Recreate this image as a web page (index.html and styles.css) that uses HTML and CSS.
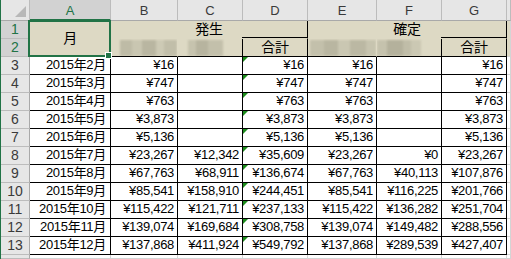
FILE: index.html
```html
<!DOCTYPE html>
<html lang="ja">
<head>
<meta charset="utf-8">
<link rel="stylesheet" href="styles.css">
</head>
<body>
<div class="sheet">
  <div class="corner"><span class="corner-tri"></span></div>
  <div class="ch ch-sel">A</div>
  <div class="ch">B</div>
  <div class="ch">C</div>
  <div class="ch">D</div>
  <div class="ch">E</div>
  <div class="ch">F</div>
  <div class="ch">G</div>
  <div class="ch"></div>

  <div class="rh rh-sel">1</div>
  <div class="c tan month">月</div>
  <div class="c tan group">発生</div>
  <div class="c tan group">確定</div>
  <div class="c tan tan-edge"></div>

  <div class="rh rh-sel">2</div>
  <div class="c tan r2 open"><span class="blur blur-b"></span></div>
  <div class="c tan r2"><span class="blur blur-c"></span></div>
  <div class="c tan r2 total">合計</div>
  <div class="c tan r2 open"><span class="blur blur-e"></span></div>
  <div class="c tan r2"><span class="blur blur-f"></span></div>
  <div class="c tan r2 total">合計</div>
  <div class="c tan tan-edge r2-edge"></div>

  <div class="rh">3</div>
  <div class="c d m">2015年2月</div><div class="c d">¥16</div><div class="c d"></div><div class="c d flag">¥16</div><div class="c d">¥16</div><div class="c d"></div><div class="c d">¥16</div><div class="c g"></div>

  <div class="rh">4</div>
  <div class="c d m">2015年3月</div><div class="c d">¥747</div><div class="c d"></div><div class="c d flag">¥747</div><div class="c d">¥747</div><div class="c d"></div><div class="c d">¥747</div><div class="c g"></div>

  <div class="rh">5</div>
  <div class="c d m">2015年4月</div><div class="c d">¥763</div><div class="c d"></div><div class="c d flag">¥763</div><div class="c d">¥763</div><div class="c d"></div><div class="c d">¥763</div><div class="c g"></div>

  <div class="rh">6</div>
  <div class="c d m">2015年5月</div><div class="c d">¥3,873</div><div class="c d"></div><div class="c d flag">¥3,873</div><div class="c d">¥3,873</div><div class="c d"></div><div class="c d">¥3,873</div><div class="c g"></div>

  <div class="rh">7</div>
  <div class="c d m">2015年6月</div><div class="c d">¥5,136</div><div class="c d"></div><div class="c d flag">¥5,136</div><div class="c d">¥5,136</div><div class="c d"></div><div class="c d">¥5,136</div><div class="c g"></div>

  <div class="rh">8</div>
  <div class="c d m">2015年7月</div><div class="c d">¥23,267</div><div class="c d">¥12,342</div><div class="c d flag">¥35,609</div><div class="c d">¥23,267</div><div class="c d">¥0</div><div class="c d">¥23,267</div><div class="c g"></div>

  <div class="rh">9</div>
  <div class="c d m">2015年8月</div><div class="c d">¥67,763</div><div class="c d">¥68,911</div><div class="c d flag">¥136,674</div><div class="c d">¥67,763</div><div class="c d">¥40,113</div><div class="c d">¥107,876</div><div class="c g"></div>

  <div class="rh">10</div>
  <div class="c d m">2015年9月</div><div class="c d">¥85,541</div><div class="c d">¥158,910</div><div class="c d flag">¥244,451</div><div class="c d">¥85,541</div><div class="c d">¥116,225</div><div class="c d">¥201,766</div><div class="c g"></div>

  <div class="rh">11</div>
  <div class="c d m">2015年10月</div><div class="c d">¥115,422</div><div class="c d">¥121,711</div><div class="c d flag">¥237,133</div><div class="c d">¥115,422</div><div class="c d">¥136,282</div><div class="c d">¥251,704</div><div class="c g"></div>

  <div class="rh">12</div>
  <div class="c d m">2015年11月</div><div class="c d">¥139,074</div><div class="c d">¥169,684</div><div class="c d flag">¥308,758</div><div class="c d">¥139,074</div><div class="c d">¥149,482</div><div class="c d">¥288,556</div><div class="c g"></div>

  <div class="rh">13</div>
  <div class="c d m">2015年12月</div><div class="c d">¥137,868</div><div class="c d">¥411,924</div><div class="c d flag">¥549,792</div><div class="c d">¥137,868</div><div class="c d">¥289,539</div><div class="c d">¥427,407</div><div class="c g"></div>

  <div class="rh"></div>
  <div class="c g"></div><div class="c g"></div><div class="c g"></div><div class="c g"></div><div class="c g"></div><div class="c g"></div><div class="c g"></div><div class="c g"></div>

  <div class="selection"></div>
  <div class="fill-handle"></div>
</div>
</body>
</html>
```

FILE: styles.css
```css
* { box-sizing: border-box; }

html, body {
  margin: 0;
  padding: 0;
  background: #ffffff;
  overflow: hidden;
}

body {
  width: 511px;
  height: 259px;
}

.sheet {
  position: relative;
  display: grid;
  grid-template-columns: 29px 81px 67px 65px 65px 69px 65px 65px 4px;
  grid-template-rows: 21px repeat(13, 18px) 4px;
  width: 511px;
  height: 259px;
  overflow: hidden;
  border-left: 1px solid #217346;
  font-family: "Liberation Sans", "Noto Sans CJK JP", sans-serif;
  font-size: 13px;
  letter-spacing: -0.3px;
  color: #000;
}

/* column headers */
.corner {
  position: relative;
  background: #e6e6e6;
  border-right: 1px solid #bcbcbc;
  border-bottom: 1px solid #a9a9a9;
}
.corner-tri {
  position: absolute;
  right: 3px;
  bottom: 3px;
  width: 0;
  height: 0;
  border-left: 11px solid transparent;
  border-bottom: 11px solid #b8b8b8;
}

.ch {
  display: flex;
  align-items: flex-end;
  justify-content: center;
  padding-bottom: 1px;
  background: #e6e6e6;
  border-right: 1px solid #bcbcbc;
  border-bottom: 1px solid #a9a9a9;
  font-size: 13px;
  letter-spacing: 0;
  line-height: 16px;
  color: #3a3a3a;
}
.ch-sel {
  background: #d2d2d2;
  color: #217346;
  border-bottom: 2px solid #217346;
  padding-bottom: 0;
}

/* row headers */
.rh {
  display: flex;
  align-items: flex-end;
  justify-content: center;
  padding-bottom: 1px;
  background: #e6e6e6;
  border-right: 1px solid #a9a9a9;
  border-bottom: 1px solid #bcbcbc;
  font-size: 14px;
  letter-spacing: 0;
  line-height: 16px;
  color: #3a3a3a;
}
.rh-sel {
  background: #d2d2d2;
  color: #217346;
}

/* cells */
.c {
  display: flex;
  align-items: flex-end;
  justify-content: flex-end;
  padding: 0 3px 1px 0;
  line-height: 16px;
  border-right: 1px solid #d4d4d4;
  border-bottom: 1px solid #d4d4d4;
  white-space: nowrap;
  overflow: hidden;
}

.tan {
  background: #ddd9c4;
  border-right-color: #ddd9c4;
  border-bottom-color: #ddd9c4;
}

.month {
  grid-row: span 2;
  justify-content: center;
  align-items: center;
  padding: 0 0 2px 0;
  font-size: 14px;
  border-right-color: #000;
  border-bottom-color: #000;
}

.group {
  grid-column: span 3;
  justify-content: center;
  padding: 0 0 1px 0;
  font-size: 14px;
  border-right-color: #000;
  background:
    linear-gradient(#000, #000) no-repeat right bottom / 65px 1px,
    #ddd9c4;
}

.tan-edge {
  border-right-color: #d4d4d4;
}

.r2 {
  border-right-color: #000;
  border-bottom-color: #000;
  justify-content: flex-start;
  align-items: center;
  padding: 0;
}
.r2.open {
  border-right-color: #ddd9c4;
}
.r2-edge {
  border-bottom-color: #d4d4d4;
}

.total {
  justify-content: center;
  align-items: flex-end;
  padding: 0 0 1px 0;
  font-size: 14px;
}

.blur {
  display: block;
  height: 16px;
  filter: blur(1.2px);
}
.blur-b {
  margin-left: 9px;
  width: 58px;
  background:
    linear-gradient(90deg, #bebba6 0 12px, #c9c6b1 12px 22px, #b9b6a1 22px 36px, #cdcab5 36px 44px, #c1bea9 44px 58px);
}
.blur-c {
  margin-left: 10px;
  width: 35px;
  background:
    linear-gradient(90deg, #c6c3ae 0 8px, #b7b49f 8px 20px, #c3c0ab 20px 35px);
}
.blur-e {
  margin-left: 2px;
  width: 67px;
  background:
    linear-gradient(90deg, #c3c0ab 0 14px, #b9b6a1 14px 28px, #cac7b2 28px 40px, #bbb8a3 40px 56px, #c7c4af 56px 67px);
}
.blur-f {
  margin-left: 0;
  width: 44px;
  background:
    linear-gradient(90deg, #c5c2ad 0 10px, #b4b19c 10px 26px, #c0bda8 26px 34px, #cbc8b3 34px 44px);
}

.d {
  border-right-color: #000;
  border-bottom-color: #000;
  background: #fff;
}
.m {
  padding-right: 4px;
}

.flag {
  position: relative;
}
.flag::before {
  content: "";
  position: absolute;
  left: 0;
  top: 0;
  width: 0;
  height: 0;
  border-top: 5px solid #1c8c1c;
  border-right: 5px solid transparent;
}

.g {
  background: #fff;
}

/* selection overlay */
.selection {
  position: absolute;
  left: 27px;
  top: 20px;
  width: 83px;
  height: 37px;
  border: 2px solid #217346;
  pointer-events: none;
}
.fill-handle {
  position: absolute;
  left: 104px;
  top: 52px;
  width: 7px;
  height: 7px;
  background: #217346;
  border: 1px solid #fff;
}
```
